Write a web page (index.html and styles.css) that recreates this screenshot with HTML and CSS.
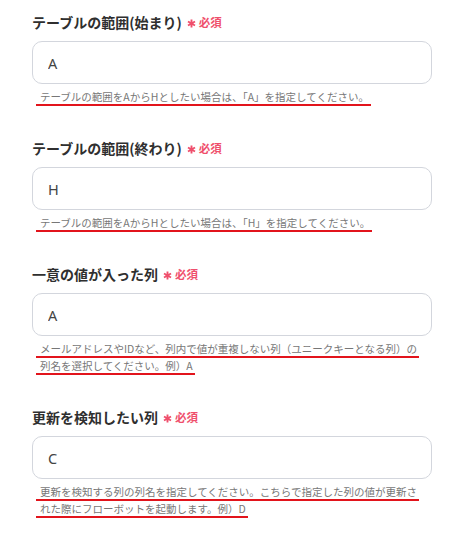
FILE: index.html
```html
<!DOCTYPE html>
<html lang="ja">
<head>
    <meta charset="UTF-8">
    <meta name="viewport" content="width=device-width, initial-scale=1.0">
    <title>設定</title>
    <link rel="stylesheet" href="styles.css">
</head>
<body>
    <div class="form">

        <div class="field">
            <div class="rotulo">
                <span>テーブルの範囲(始まり)</span>
                <svg class="ast" viewBox="0 0 10 10"><path d="M5 0.5V9.5M1.1 2.75L8.9 7.25M1.1 7.25L8.9 2.75"/></svg>
                <span class="req">必須</span>
            </div>
            <input class="campo" type="text" value="A">
            <div class="ajuda">
                <span class="linha">テーブルの範囲をAからHとしたい場合は、「A」を指定してください。</span>
            </div>
        </div>

        <div class="field">
            <div class="rotulo">
                <span>テーブルの範囲(終わり)</span>
                <svg class="ast" viewBox="0 0 10 10"><path d="M5 0.5V9.5M1.1 2.75L8.9 7.25M1.1 7.25L8.9 2.75"/></svg>
                <span class="req">必須</span>
            </div>
            <input class="campo" type="text" value="H">
            <div class="ajuda">
                <span class="linha">テーブルの範囲をAからHとしたい場合は、「H」を指定してください。</span>
            </div>
        </div>

        <div class="field">
            <div class="rotulo">
                <span>一意の値が入った列</span>
                <svg class="ast" viewBox="0 0 10 10"><path d="M5 0.5V9.5M1.1 2.75L8.9 7.25M1.1 7.25L8.9 2.75"/></svg>
                <span class="req">必須</span>
            </div>
            <input class="campo" type="text" value="A">
            <div class="ajuda">
                <span class="linha">メールアドレスやIDなど、列内で値が重複しない列（ユニークキーとなる列）の</span>
                <span class="linha">列名を選択してください。例）A</span>
            </div>
        </div>

        <div class="field">
            <div class="rotulo">
                <span>更新を検知したい列</span>
                <svg class="ast" viewBox="0 0 10 10"><path d="M5 0.5V9.5M1.1 2.75L8.9 7.25M1.1 7.25L8.9 2.75"/></svg>
                <span class="req">必須</span>
            </div>
            <input class="campo" type="text" value="C">
            <div class="ajuda">
                <span class="linha">更新を検知する列の列名を指定してください。こちらで指定した列の値が更新さ</span>
                <span class="linha">れた際にフローボットを起動します。例）D</span>
            </div>
        </div>

    </div>
</body>
</html>
```

FILE: styles.css
```css
*{
    margin: 0;
    padding: 0;
    box-sizing: border-box;
}
body{
    background-color: #ffffff;
    font-family: "Noto Sans CJK JP", "Noto Sans", sans-serif;
    color: #333333;
    padding: 12px 30px 0 32px;
}
.form{
    width: 400px;
    display: flex;
    flex-direction: column;
    gap: 32px;
}
.field{
    display: flex;
    flex-direction: column;
}
.rotulo{
    display: flex;
    align-items: center;
    height: 20px;
    font-size: 14px;
    font-weight: bold;
    color: #2f2f2f;
    margin-bottom: 9px;
}
.ast{
    width: 9px;
    height: 9px;
    margin: 3px 3px 0 5px;
    stroke: #ef4f6c;
    stroke-width: 2.1;
    fill: none;
}
.req{
    font-size: 11.5px;
    color: #ef4f6c;
}
.campo{
    width: 100%;
    height: 43px;
    border: 1px solid #d3d6dd;
    border-radius: 10px;
    padding: 0 15px;
    font-family: "Noto Sans", "Noto Sans CJK JP", sans-serif;
    font-size: 14.5px;
    color: #444444;
    outline: none;
}
.ajuda{
    margin-top: 5px;
    padding-left: 8px;
    font-size: 10.5px;
    color: #777777;
}
.linha{
    display: table;
    white-space: nowrap;
    line-height: 15px;
    border-bottom: 2.5px solid #e2141c;
    margin-left: -4px;
    padding: 0 2px 0 4px;
}
```
